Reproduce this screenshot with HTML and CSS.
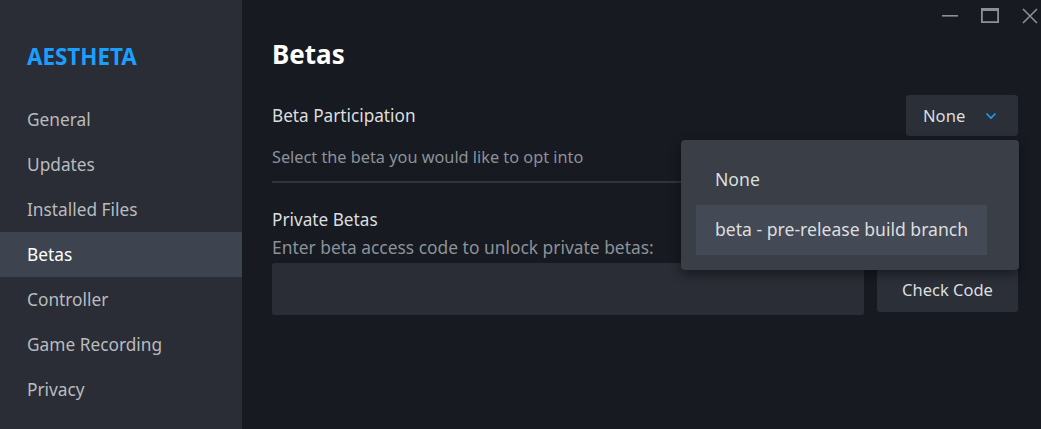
FILE: index.html
```html
<!DOCTYPE html>
<html>
<head>
<meta charset="utf-8">
<link rel="stylesheet" href="styles.css">
</head>
<body>
<div class="app">
  <aside class="sidebar">
    <div class="game-title">AESTHETA</div>
    <nav class="nav">
      <div class="nav-item">General</div>
      <div class="nav-item">Updates</div>
      <div class="nav-item">Installed Files</div>
      <div class="nav-item active">Betas</div>
      <div class="nav-item">Controller</div>
      <div class="nav-item">Game Recording</div>
      <div class="nav-item">Privacy</div>
    </nav>
  </aside>
  <main class="main">
    <div class="titlebar">
      <div class="win-btn">
        <svg width="18" height="18" viewBox="0 0 18 18"><rect x="1" y="8" width="16" height="1.6" fill="#8a9098"/></svg>
      </div>
      <div class="win-btn">
        <svg width="20" height="18" viewBox="0 0 20 18"><rect x="1.9" y="1.9" width="16.2" height="13.2" fill="none" stroke="#8a9098" stroke-width="1.8"/><rect x="1" y="1" width="18" height="3" fill="#8a9098"/></svg>
      </div>
      <div class="win-btn">
        <svg width="18" height="18" viewBox="0 0 18 18"><path d="M2 2 L16 16 M16 2 L2 16" stroke="#8a9098" stroke-width="1.6" fill="none"/></svg>
      </div>
    </div>
    <div class="content">
      <h1 class="page-title">Betas</h1>
      <div class="section">
        <div class="row">
          <div class="label">Beta Participation</div>
          <div class="select">
            <span>None</span>
            <svg class="chev" width="12" height="8" viewBox="0 0 12 8"><path d="M1.5 1.5 L6 6 L10.5 1.5" stroke="#1a9fff" stroke-width="1.6" fill="none"/></svg>
          </div>
        </div>
        <div class="desc">Select the beta you would like to opt into</div>
      </div>
      <div class="private">
        <div class="label">Private Betas</div>
        <div class="sub">Enter beta access code to unlock private betas:</div>
        <div class="code-row">
          <div class="code-input"></div>
          <div class="btn">Check Code</div>
        </div>
      </div>
    </div>
  </main>
  <div class="popup">
    <div class="opt">None</div>
    <div class="opt hl">beta - pre-release build branch</div>
  </div>
</div>
</body>
</html>
```
FILE: styles.css
```css
* { box-sizing: border-box; }
html, body { margin: 0; padding: 0; }
body {
  background: #171a21;
  font-family: "Noto Sans", "Open Sans", sans-serif;
  color: #dcdedf;
}
.app {
  position: relative;
  display: flex;
  width: 1041px;
  height: 429px;
  overflow: hidden;
}
.sidebar {
  width: 242px;
  flex: none;
  background: #2a2d35;
  display: flex;
  flex-direction: column;
}
.game-title {
  color: #1a9fff;
  font-weight: 700;
  font-size: 22.4px;
  line-height: 28px;
  padding: 43px 0 0 27px;
  height: 97px;
}
.nav { display: flex; flex-direction: column; }
.nav-item {
  height: 45px;
  line-height: 45px;
  padding-left: 27px;
  font-size: 17.3px;
  color: #b8bcbf;
}
.nav-item.active {
  background: #3d4450;
  color: #ffffff;
}
.main {
  flex: 1;
  display: flex;
  flex-direction: column;
}
.titlebar {
  height: 34px;
  display: flex;
  justify-content: flex-end;
  align-items: center;
  padding-right: 0;
  gap: 18px;
}
.win-btn { display: flex; align-items: center; justify-content: center; width: 22px; height: 34px; padding-bottom: 2px; }
.content {
  padding: 0 23px 0 30px;
}
.page-title {
  margin: 5px 0 0 0;
  font-size: 26px;
  line-height: 30px;
  font-weight: 700;
  color: #ffffff;
}
.section {
  margin-top: 26px;
  border-bottom: 2px solid #30343c;
  padding-bottom: 13px;
}
.row {
  display: flex;
  justify-content: space-between;
  align-items: center;
}
.label {
  font-size: 17.2px;
  line-height: 24px;
  color: #dcdedf;
}
.select {
  width: 112px;
  height: 41px;
  background: #2b2f38;
  border-radius: 3px;
  display: flex;
  align-items: center;
  padding-left: 17px;
  font-size: 16.6px;
  color: #dcdedf;
}
.select .chev { margin-left: 20px; }
.desc {
  margin-top: 11px;
  font-size: 16.3px;
  line-height: 21px;
  color: #8b929a;
}
.private { margin-top: 25px; }
.sub {
  margin-top: 3px;
  font-size: 17.4px;
  line-height: 24px;
  color: #8b929a;
}
.code-row {
  margin-top: 4px;
  display: flex;
  align-items: center;
  gap: 13px;
}
.code-input {
  width: 592px;
  height: 52px;
  background: #2a2d35;
  border-radius: 3px;
}
.btn {
  width: 141px;
  height: 43px;
  margin-top: 2px;
  background: #2b2f38;
  border-radius: 3px;
  display: flex;
  align-items: center;
  justify-content: center;
  font-size: 16.5px;
  color: #dcdedf;
  padding-bottom: 2px;
}
.popup {
  position: absolute;
  left: 681px;
  top: 140px;
  width: 338px;
  height: 130px;
  background: #3a3e47;
  border-radius: 4px;
  box-shadow: 0 4px 12px rgba(0,0,0,0.45);
  padding: 15px 32px 15px 15px;
}
.opt {
  height: 50px;
  line-height: 48px;
  padding-left: 19px;
  font-size: 17.6px;
  color: #dcdedf;
}
.opt.hl { background: #434955; }
```
